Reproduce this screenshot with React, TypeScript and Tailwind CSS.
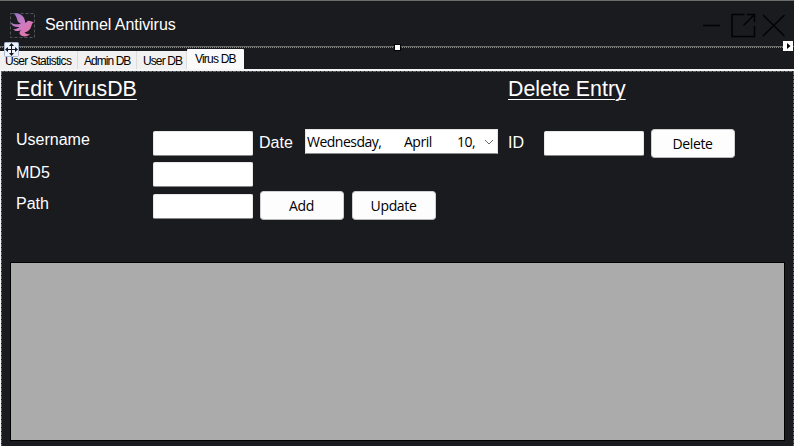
import React from "react";

function Field({ className = "" }: { className?: string }) {
  return (
    <input
      className={`block h-[25px] w-[100px] shrink-0 rounded-[2px] border border-[#e8e8e8] border-b-[#868686] bg-white outline-none ${className}`}
    />
  );
}

function Button({ children, className = "" }: { children: React.ReactNode; className?: string }) {
  return (
    <button
      className={`flex h-[29px] w-[84px] shrink-0 items-center justify-center rounded-[4px] border border-[#d0d0d0] border-b-[#b8b8b8] bg-[#fdfdfd] pr-px font-['Open_Sans',sans-serif] text-[14px] leading-none tracking-[-0.35px] text-black ${className}`}
    >
      {children}
    </button>
  );
}

function Logo() {
  return (
    <svg width="25" height="26" viewBox="0 0 25 26" className="shrink-0">
      <defs>
        <linearGradient id="bird" x1="0" y1="0" x2="1" y2="1">
          <stop offset="0" stopColor="#8f74c8" />
          <stop offset="0.5" stopColor="#cf7ac2" />
          <stop offset="1" stopColor="#ee7098" />
        </linearGradient>
      </defs>
      <rect x="0.5" y="1.5" width="24" height="24" fill="none" stroke="#50545a" strokeDasharray="3 2" />
      <path
        fill="url(#bird)"
        d="M3.4 1.2C8 1 12 2.4 13.6 5.2C14.7 7 15 9 15.4 11C16.6 10.6 17 8.9 18.8 8.8C20.2 8.7 21 9.8 24 10.4C21.8 11 21.8 12.6 21.3 14.3C20.3 18 17.7 19.9 14.6 20.3C15.4 22 17.8 22.6 20.2 22C17.5 25.2 12.2 25 10 22.4C9 21 9.4 19.6 11.4 17.6C8.3 19.8 5 19.5 3.2 17.2C5.5 17.2 7.6 16.4 9.6 14.9C5 15.4 1.6 13.8 0.8 10.4C3.8 12.4 7.5 12.7 10.8 11.7C8.6 10.8 7.6 9.6 7.2 7.6C6.6 4.8 5.4 3 3.4 1.2Z"
      />
    </svg>
  );
}

function WindowControls() {
  return (
    <svg width="82" height="26" viewBox="0 0 82 26" className="shrink-0" fill="none" stroke="#020203" strokeWidth="1.5">
      <path d="M0 13.5H17" />
      <path d="M41.5 2.5H29V24.5H51.5V14M44 2.5H51.5V10M51 3L40.5 13.5" />
      <path d="M60 3L81.5 24M81.5 3L60 24" />
    </svg>
  );
}

function Tab({ label, className }: { label: string; className: string }) {
  return (
    <div className={`h-[18px] shrink-0 overflow-hidden whitespace-nowrap border-r border-[#dcdcdc] bg-[#f1f1f1] text-[12px] leading-[20px] text-black ${className}`}>
      {label}
    </div>
  );
}

function Label({ children, className = "" }: { children: React.ReactNode; className?: string }) {
  return <span className={`shrink-0 whitespace-nowrap text-[16px] leading-[18px] ${className}`}>{children}</span>;
}

export default function App() {
  return (
    <div className="relative flex h-[446px] w-[794px] flex-col overflow-hidden bg-[#1a1b1f] font-['Liberation_Sans',Arial,sans-serif] text-white">
      <header className="flex h-[45px] shrink-0 border-t border-[#6a6e6b] pl-[10px] pt-[11px]">
        <Logo />
        <h1 className="ml-[10px] mt-[4px] w-[658px] shrink-0 text-[16px] font-normal leading-[18px] tracking-[-0.05px]">Sentinnel Antivirus</h1>
        <WindowControls />
      </header>
      <div className="mt-px h-px shrink-0 bg-[#686b69]" />
      <div className="h-px shrink-0 bg-[repeating-linear-gradient(90deg,#858885_0_1px,#1a1b1f_1px_2px)]" />

      <nav className="flex h-[21px] shrink-0 items-end">
        <Tab label="User Statistics" className="w-[78px] pl-[5px] tracking-[-0.7px]" />
        <Tab label="Admin DB" className="w-[59px] pl-[6px] tracking-[-0.95px]" />
        <Tab label="User DB" className="w-[50px] pl-[6px] tracking-[-0.9px]" />
        <div className="h-[20px] w-[57px] shrink-0 whitespace-nowrap rounded-t-[1px] bg-[#fafafa] pl-[8px] text-[12px] leading-[21px] tracking-[-0.8px] text-black">
          Virus DB
        </div>
      </nav>
      <div className="h-[2px] shrink-0 bg-[#f5f5f5]" />

      <main className="flex min-h-0 flex-1 flex-col border-l border-[#f5f5f5]">
        <div className="h-px shrink-0 bg-[repeating-linear-gradient(90deg,#5e6266_0_3px,#1a1b1f_3px_4px)]" />
        <div className="flex min-h-0 flex-1">
          <div className="w-px shrink-0 bg-[repeating-linear-gradient(180deg,#5e6266_0_3px,#1a1b1f_3px_4px)]" />
          <div className="flex min-w-0 flex-1 flex-col">
            <div className="flex h-[190px] shrink-0 pl-[14px]">
              <section className="w-[492px] shrink-0">
                <h2 className="h-[57px] pt-[5px] text-[21.33px] font-normal leading-[24px] tracking-[0.03px] underline decoration-1 underline-offset-[3px]">Edit VirusDB</h2>
                <div className="flex h-[33px]">
                  <Label className="mt-[2px] w-[137px]">Username</Label>
                  <Field className="mt-[2px]" />
                  <Label className="ml-[6px] mt-[5px] w-[46px]">Date</Label>
                  <div className="flex h-[25px] w-[193px] shrink-0 items-center whitespace-nowrap border border-[#e5e5e5] border-b-[#8b8b8b] bg-white pl-px font-['Open_Sans',sans-serif] text-[14px] leading-none tracking-[-0.5px] text-black">
                    <span className="w-[97px]">Wednesday,</span>
                    <span className="w-[53px]">April</span>
                    <span className="w-[27px]">10,</span>
                    <svg width="10" height="6" viewBox="0 0 10 6" fill="none" stroke="#686868">
                      <path d="M1 1L5 5L9 1" />
                    </svg>
                  </div>
                </div>
                <div className="flex h-[29px]">
                  <Label className="mt-[2px] w-[137px]">MD5</Label>
                  <Field />
                </div>
                <div className="flex">
                  <Label className="mt-[4px] w-[137px]">Path</Label>
                  <Field className="mt-[3px]" />
                  <Button className="ml-[7px]">Add</Button>
                  <Button className="ml-[8px]">Update</Button>
                </div>
              </section>
              <section className="shrink-0">
                <h2 className="h-[57px] pt-[5px] text-[21.33px] font-normal leading-[24px] tracking-[0.03px] underline decoration-1 underline-offset-[3px]">Delete Entry</h2>
                <div className="flex">
                  <Label className="mt-[5px] w-[36px]">ID</Label>
                  <Field className="mt-[2px]" />
                  <Button className="ml-[7px]">Delete</Button>
                </div>
              </section>
            </div>
            <div className="ml-[8px] h-[179px] w-[775px] border border-black bg-[#ababab]" />
          </div>
          <div className="w-px shrink-0 bg-[repeating-linear-gradient(180deg,#5e6266_0_3px,#1a1b1f_3px_4px)]" />
        </div>
      </main>

      <svg className="absolute left-[4px] top-[42px]" width="15" height="15" viewBox="0 0 15 15">
        <rect x="0.5" y="0.5" width="14" height="14" rx="1" fill="#eef2fa" stroke="#a9b7cf" />
        <path d="M7.5 2V13M2 7.5H13" stroke="#111820" />
        <path d="M7.5 1L10 4H5ZM7.5 14L5 11H10ZM1 7.5L4 5V10ZM14 7.5L11 10V5Z" fill="#111820" />
      </svg>
      <div className="absolute left-[394px] top-[44px] h-[7px] w-[7px] border border-black bg-white" />
      <svg className="absolute left-[783px] top-[41px]" width="10" height="10" viewBox="0 0 10 10">
        <rect width="10" height="10" fill="#fff" />
        <path d="M4 2L7.5 5L4 8Z" fill="#000" />
      </svg>
    </div>
  );
}
